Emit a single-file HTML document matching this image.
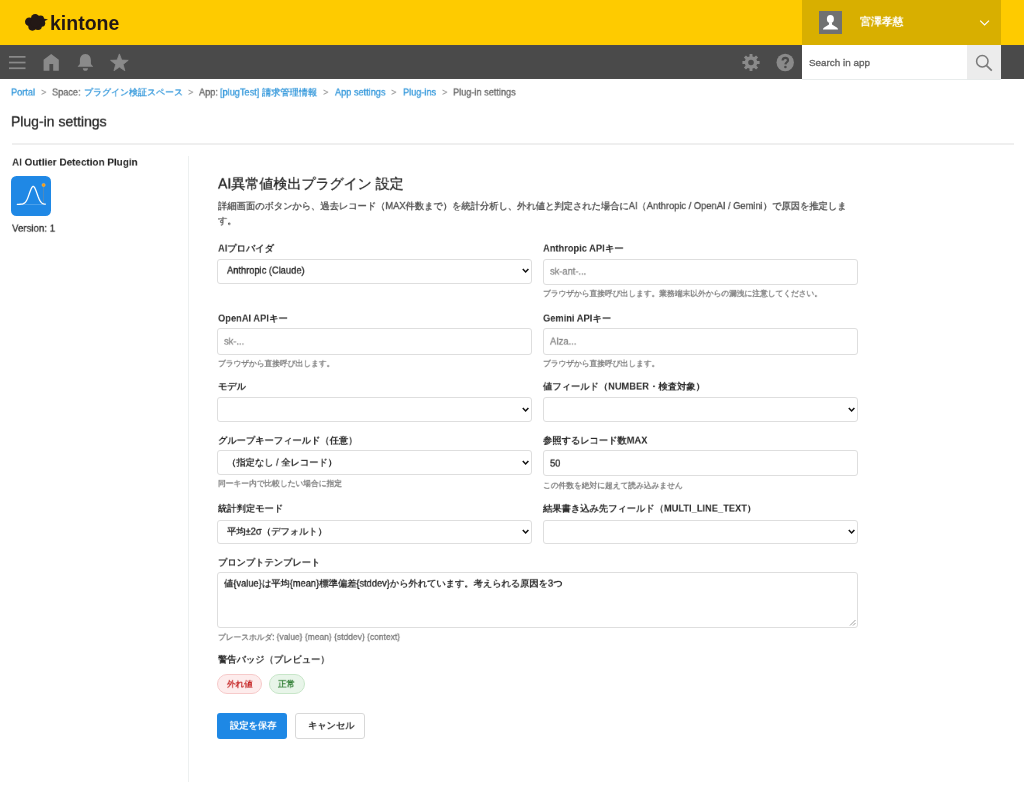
<!DOCTYPE html>
<html><head><meta charset="utf-8">
<style>
*{box-sizing:border-box;margin:0;padding:0}
html,body{width:1024px;height:799px;overflow:hidden}
body{position:relative;font-family:"Liberation Sans",sans-serif;color:#333}
.a{position:absolute;white-space:nowrap;will-change:transform}
.z{transform-origin:0 0;transform:scale(.775)}
.st{-webkit-text-stroke-width:.35px}
#hdr{left:0;top:0;width:1024px;height:45px;background:#fecb00}
#user{left:802px;top:0;width:199px;height:45px;background:#d8af00}
#nav{left:0;top:45px;width:1024px;height:34.4px;background:#4a4a4a}
#search{left:802px;top:45px;width:165px;height:34.6px;background:#fff;border-bottom:1px solid #e8ecec}
#sbtn{left:967px;top:45px;width:34px;height:34.6px;background:#ececec;border-bottom:1px solid #e6eaea}
.bcz{top:86.8px;font-size:12px;line-height:14px;transform-origin:0 0;transform:scale(.765)}
.bc .l{color:#3498db}
.bc .s{color:#888;padding:0 7px}
.lbl{font-size:12px;font-weight:bold;color:#2a2a2a;line-height:14px}
.inp{position:absolute;border:1px solid #dedede;border-radius:3px;background:#fff;height:26.4px;width:314.5px}
.sel{position:absolute;border:1px solid #dedede;border-radius:3px;background:#fff;height:24.5px;width:314.5px}
.txt{font-size:12px;line-height:14px;color:#222}
.ph{color:#888}
.help{font-size:10px;line-height:12px;color:#7c7c7c}
.chev{position:absolute;width:9px;height:7px}
</style></head><body>
<div id="hdr" class="a"></div>
<div id="user" class="a"></div>
<div id="nav" class="a"></div>
<div id="search" class="a"></div>
<div id="sbtn" class="a"></div>

<!-- header svg icons -->
<svg class="a" style="left:0;top:0" width="1024" height="80" viewBox="0 0 1024 80">
  <!-- kintone cloud -->
  <g fill="#231815">
    <circle cx="29.3" cy="21.8" r="4.3"/>
    <circle cx="35.2" cy="18.2" r="4.2"/>
    <circle cx="40.6" cy="18.8" r="3.4"/>
    <circle cx="41.6" cy="23.2" r="3.6"/>
    <circle cx="32.4" cy="26.6" r="4.1"/>
    <circle cx="38.0" cy="26.2" r="3.8"/>
    <circle cx="35.5" cy="22.5" r="5"/>
    <path d="M42.5 18.2 L48 19.4 L43 21.8 Z"/>
  </g>
  <!-- avatar -->
  <rect x="819" y="11" width="23" height="23" fill="#707171"/>
  <g fill="#fff">
    <ellipse cx="830.4" cy="18.95" rx="3.5" ry="4.05"/>
    <path d="M829 22.5 L829 24.6 L824.2 27.6 C823.3 28.2 823 28.8 823 29.6 L838 29.6 C838 28.8 837.7 28.2 836.8 27.6 L832 24.6 L832 22.5 Z"/>
  </g>
  <!-- user chevron -->
  <path d="M980.2 20.6 L984.6 25 L989 20.6" fill="none" stroke="#fff" stroke-width="1.2"/>
  <!-- hamburger -->
  <g fill="#8a8a8a">
    <rect x="9" y="56" width="16.5" height="1.7"/>
    <rect x="9" y="61.7" width="16.5" height="1.7"/>
    <rect x="9" y="67.4" width="16.5" height="1.7"/>
    <!-- home -->
    <path d="M51.2 54.1 L58.8 59.8 L58.8 70.8 L53.2 70.8 L53.2 64.1 L49.4 64.1 L49.4 70.8 L43.6 70.8 L43.6 59.8 Z"/>
    <!-- bell -->
    <path d="M85.4 54 C81.6 54 79.9 57 79.9 60.5 L79.9 63.2 C79.9 64.8 78.4 65.5 77.8 66.3 L77.8 66.8 L93 66.8 L93 66.3 C92.4 65.5 90.9 64.8 90.9 63.2 L90.9 60.5 C90.9 57 89.2 54 85.4 54 Z"/>
    <path d="M82.8 68.2 L88 68.2 C88 69.8 86.8 70.8 85.4 70.8 C84 70.8 82.8 69.8 82.8 68.2 Z"/>
    <!-- star -->
    <polygon points="119.40,53.91 121.69,60.04 128.24,60.33 123.11,64.41 124.86,70.72 119.40,67.10 113.94,70.72 115.69,64.41 110.56,60.33 117.11,60.04" stroke="#8a8a8a" stroke-width="0.8" stroke-linejoin="round"/>
    <!-- gear -->
    <g transform="translate(751 62.5)">
      <path d="M-1.52 -6.11 L-1.44 -8.58 L1.44 -8.58 L1.52 -6.11 L3.24 -5.40 L5.05 -7.08 L7.08 -5.05 L5.40 -3.24 L6.11 -1.52 L8.58 -1.44 L8.58 1.44 L6.11 1.52 L5.40 3.24 L7.08 5.05 L5.05 7.08 L3.24 5.40 L1.52 6.11 L1.44 8.58 L-1.44 8.58 L-1.52 6.11 L-3.24 5.40 L-5.05 7.08 L-7.08 5.05 L-5.40 3.24 L-6.11 1.52 L-8.58 1.44 L-8.58 -1.44 L-6.11 -1.52 L-5.40 -3.24 L-7.08 -5.05 L-5.05 -7.08 L-3.24 -5.40 Z M0 -2.8 A2.8 2.8 0 1 0 0 2.8 A2.8 2.8 0 1 0 0 -2.8 Z" fill-rule="evenodd"/>
    </g>
    <!-- help -->
    <circle cx="785.2" cy="62.5" r="8.7"/>
  </g>
  <path d="M782.6 60.6 C782.6 58.8 783.7 57.8 785.3 57.8 C786.9 57.8 788 58.8 788 60.2 C788 62.2 785.5 62.3 785.4 64.4" fill="none" stroke="#4a4a4a" stroke-width="2.2"/>
  <circle cx="785.4" cy="67" r="1.3" fill="#4a4a4a"/>
  <!-- magnifier -->
  <circle cx="982.3" cy="61.2" r="5.7" fill="none" stroke="#7a7a7a" stroke-width="1.5"/>
  <path d="M986.3 65.3 L991.8 70.6" stroke="#7a7a7a" stroke-width="1.7"/>
</svg>
<div class="a" style="left:50px;top:12px;font-size:19.5px;line-height:22px;font-weight:bold;color:#231815">kintone</div>
<div class="a z" style="left:860px;top:15.3px;font-size:14px;line-height:16px;color:#fff;font-weight:bold">宮澤孝慈</div>
<div class="a st" style="left:808.5px;top:57px;font-size:9.9px;line-height:12px;color:#666">Search in app</div>

<!-- breadcrumb -->
<div class="a bcz st" style="left:11.4px;color:#3498db">Portal</div>
<div class="a bcz" style="left:40.8px;color:#8c8c8c">&gt;</div>
<div class="a bcz st" style="left:52.3px;color:#666">Space:</div>
<div class="a bcz st" style="left:84.2px;color:#3498db;transform:scale(.75)">プラグイン検証スペース</div>
<div class="a bcz" style="left:188.2px;color:#8c8c8c">&gt;</div>
<div class="a bcz st" style="left:199.1px;color:#666">App:</div>
<div class="a bcz st" style="left:220.2px;color:#3498db">[plugTest] 請求管理情報</div>
<div class="a bcz" style="left:323.4px;color:#8c8c8c">&gt;</div>
<div class="a bcz st" style="left:334.9px;color:#3498db">App settings</div>
<div class="a bcz" style="left:391.4px;color:#8c8c8c">&gt;</div>
<div class="a bcz st" style="left:402.6px;color:#3498db">Plug-ins</div>
<div class="a bcz" style="left:442.3px;color:#8c8c8c">&gt;</div>
<div class="a bcz st" style="left:453.4px;color:#666">Plug-in settings</div>

<div class="a z st" style="left:11.4px;top:113.6px;font-size:18.05px;line-height:20px;color:#222">Plug-in settings</div>
<div class="a" style="left:11.5px;top:143px;height:2px;background:#efefef;width:1001.5px"></div>

<!-- sidebar -->
<div class="a z" style="left:11.5px;top:157.2px;font-size:12.8px;font-weight:bold;line-height:14px;color:#1e1e1e">AI Outlier Detection Plugin</div>
<svg class="a" style="left:11px;top:176px" width="40" height="40" viewBox="0 0 40 40">
  <rect x="0" y="0" width="40" height="40" rx="5.5" fill="#1f88e5"/>
  <line x1="7" y1="28.4" x2="33" y2="28.4" stroke="#fff" stroke-width="0.5" opacity="0.45"/>
  <line x1="32.4" y1="10" x2="32.4" y2="28.2" stroke="#d09050" stroke-width="0.5" opacity="0.6"/>
  <path d="M6.30 28.30 L6.80 28.30 L7.30 28.29 L7.80 28.29 L8.30 28.28 L8.80 28.26 L9.30 28.24 L9.80 28.21 L10.30 28.17 L10.80 28.10 L11.30 28.01 L11.80 27.88 L12.30 27.70 L12.80 27.46 L13.30 27.15 L13.80 26.74 L14.30 26.24 L14.80 25.61 L15.30 24.86 L15.80 23.97 L16.30 22.94 L16.80 21.78 L17.30 20.51 L17.80 19.14 L18.30 17.73 L18.80 16.30 L19.30 14.92 L19.80 13.64 L20.30 12.50 L20.80 11.57 L21.30 10.90 L21.80 10.50 L22.30 10.41 L22.80 10.62 L23.30 11.13 L23.80 11.92 L24.30 12.93 L24.80 14.14 L25.30 15.47 L25.80 16.87 L26.30 18.30 L26.80 19.70 L27.30 21.03 L27.80 22.26 L28.30 23.36 L28.80 24.34 L29.30 25.18 L29.80 25.88 L30.30 26.45 L30.80 26.92 L31.30 27.28 L31.80 27.56 L32.30 27.78 L32.80 27.93 L33.30 28.05 L33.80 28.13 L34.30 28.19" fill="none" stroke="#fff" stroke-width="1.3" stroke-linejoin="round" stroke-linecap="round"/>
  <circle cx="32.6" cy="9" r="1.6" fill="#ff9800" stroke="#ffc060" stroke-width="0.5"/>
</svg>
<div class="a z st" style="left:11.5px;top:223px;font-size:12.5px;line-height:14px;color:#333">Version: 1</div>
<div class="a" style="left:188px;top:156px;width:1px;height:626px;background:#edf0f0"></div>

<!-- title -->
<div class="a st" style="left:218px;top:176px;font-size:18px;line-height:20px;color:#222;transform-origin:0 0;transform:scale(.78)">AI異常値検出プラグイン 設定</div>
<div class="a z st" style="left:218px;top:199px;width:826px;white-space:normal;font-size:12px;line-height:18.7px;color:#4d4d4d">詳細画面のボタンから、過去レコード（MAX件数まで）を統計分析し、外れ値と判定された場合にAI（Anthropic / OpenAI / Gemini）で原因を推定します。</div>

<!-- row 1 -->
<div class="a z lbl" style="left:217.6px;top:243px">AIプロバイダ</div>
<div class="sel" style="left:217.2px;top:259px"></div>
<div class="a z st txt" style="left:227px;top:265.4px">Anthropic (Claude)</div>
<svg class="chev" style="left:522px;top:268px" viewBox="0 0 9 7"><path d="M0.8 1 L3.6 4 L6.4 1" fill="none" stroke="#111" stroke-width="1.5"/></svg>

<div class="a z lbl" style="left:543.1px;top:243px">Anthropic APIキー</div>
<div class="inp" style="left:543.1px;top:258.6px"></div>
<div class="a z st txt ph" style="left:550px;top:266px">sk-ant-...</div>
<div class="a z st help" style="left:543.1px;top:289px">ブラウザから直接呼び出します。業務端末以外からの漏洩に注意してください。</div>

<!-- row 2 -->
<div class="a z lbl" style="left:217.6px;top:313px">OpenAI APIキー</div>
<div class="inp" style="left:217.2px;top:328.2px"></div>
<div class="a z st txt ph" style="left:224px;top:336px">sk-...</div>
<div class="a z st help" style="left:218px;top:359px">ブラウザから直接呼び出します。</div>

<div class="a z lbl" style="left:543.1px;top:313px">Gemini APIキー</div>
<div class="inp" style="left:543.1px;top:328.2px"></div>
<div class="a z st txt ph" style="left:550px;top:336px">AIza...</div>
<div class="a z st help" style="left:543.1px;top:359px">ブラウザから直接呼び出します。</div>

<!-- row 3 -->
<div class="a z lbl" style="left:217.6px;top:381px">モデル</div>
<div class="sel" style="left:217.2px;top:397.2px"></div>
<svg class="chev" style="left:522px;top:406.5px" viewBox="0 0 9 7"><path d="M0.8 1 L3.6 4 L6.4 1" fill="none" stroke="#111" stroke-width="1.5"/></svg>

<div class="a z lbl" style="left:543.1px;top:381px">値フィールド（NUMBER・検査対象）</div>
<div class="sel" style="left:543.1px;top:397.2px"></div>
<svg class="chev" style="left:848px;top:406.5px" viewBox="0 0 9 7"><path d="M0.8 1 L3.6 4 L6.4 1" fill="none" stroke="#111" stroke-width="1.5"/></svg>

<!-- row 4 -->
<div class="a z lbl" style="left:217.6px;top:434.5px">グループキーフィールド（任意）</div>
<div class="sel" style="left:217.2px;top:450.4px"></div>
<div class="a z st txt" style="left:227px;top:456.5px">（指定なし / 全レコード）</div>
<svg class="chev" style="left:522px;top:459.5px" viewBox="0 0 9 7"><path d="M0.8 1 L3.6 4 L6.4 1" fill="none" stroke="#111" stroke-width="1.5"/></svg>
<div class="a z st help" style="left:218px;top:479px">同一キー内で比較したい場合に指定</div>

<div class="a z lbl" style="left:543.1px;top:434.5px">参照するレコード数MAX</div>
<div class="inp" style="left:543.1px;top:450.1px;height:26.4px"></div>
<div class="a z st txt" style="left:550px;top:458.4px">50</div>
<div class="a z st help" style="left:543.1px;top:481.2px">この件数を絶対に超えて読み込みません</div>

<!-- row 5 -->
<div class="a z lbl" style="left:217.6px;top:503px">統計判定モード</div>
<div class="sel" style="left:217.2px;top:519.6px"></div>
<div class="a z st txt" style="left:227px;top:526px">平均±2σ（デフォルト）</div>
<svg class="chev" style="left:522px;top:529px" viewBox="0 0 9 7"><path d="M0.8 1 L3.6 4 L6.4 1" fill="none" stroke="#111" stroke-width="1.5"/></svg>

<div class="a z lbl" style="left:543.1px;top:503px">結果書き込み先フィールド（MULTI_LINE_TEXT）</div>
<div class="sel" style="left:543.1px;top:519.6px"></div>
<svg class="chev" style="left:848px;top:529px" viewBox="0 0 9 7"><path d="M0.8 1 L3.6 4 L6.4 1" fill="none" stroke="#111" stroke-width="1.5"/></svg>

<!-- row 6 textarea -->
<div class="a z lbl" style="left:217.6px;top:556.5px">プロンプトテンプレート</div>
<div class="inp" style="left:217.2px;top:572.2px;width:640.5px;height:55.4px"></div>
<svg class="a" style="left:848px;top:618px" width="9" height="9" viewBox="0 0 9 9"><path d="M7.5 2 L2 7.5 M7.5 5 L5 7.5" stroke="#888" stroke-width="0.8"/></svg>
<div class="a z st txt" style="left:224px;top:578px">値{value}は平均{mean}標準偏差{stddev}から外れています。考えられる原因を3つ</div>
<div class="a z st help" style="left:218px;top:632px">プレースホルダ: <span style="font-size:10.95px">{value} {mean} {stddev} {context}</span></div>

<!-- badges -->
<div class="a z lbl" style="left:217.6px;top:654px">警告バッジ（プレビュー）</div>
<div class="a" style="left:217.3px;top:674.2px;width:44.5px;height:20.4px;border-radius:10.2px;background:#fdecec;border:1px solid #f6caca"></div>
<div class="a z" style="left:227px;top:679px;font-size:11px;line-height:13px;font-weight:bold;color:#c62828">外れ値</div>
<div class="a" style="left:268.9px;top:674.2px;width:35.8px;height:20.4px;border-radius:10.2px;background:#e8f5e9;border:1px solid #c8e6c9"></div>
<div class="a z" style="left:278px;top:679px;font-size:11px;line-height:13px;font-weight:bold;color:#2e7d32">正常</div>

<!-- buttons -->
<div class="a" style="left:217.2px;top:713px;width:70.3px;height:26.3px;border-radius:3px;background:#1e88e5"></div>
<div class="a z" style="left:230px;top:720px;font-size:12px;line-height:14px;font-weight:bold;color:#fff">設定を保存</div>
<div class="a" style="left:295.2px;top:713.2px;width:69.7px;height:25.8px;border-radius:3px;background:#fff;border:1px solid #d8d8d8"></div>
<div class="a z" style="left:307.5px;top:720px;font-size:12px;line-height:14px;font-weight:bold;color:#333">キャンセル</div>

</body></html>
